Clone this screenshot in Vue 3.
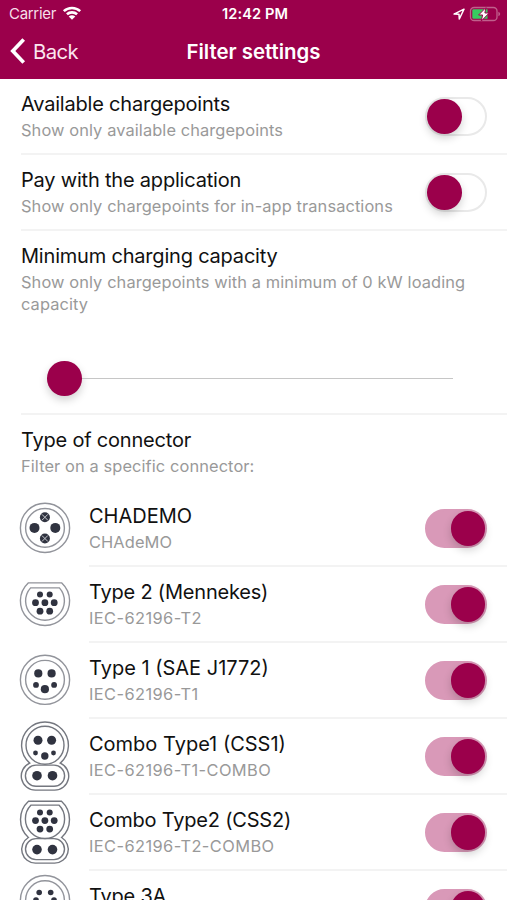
<script setup>
import { reactive } from 'vue'

const filters = reactive([
  { title: 'Available chargepoints', sub: 'Show only available chargepoints', on: false },
  { title: 'Pay with the application', sub: 'Show only chargepoints for in-app transactions', on: false }
])

const round = (cy, r) => `M${26 - r} ${cy}a${r} ${r} 0 1 1 ${2 * r} 0a${r} ${r} 0 1 1 ${-2 * r} 0Z`
const flat = (cy, r, top) => {
  const h = Math.sqrt(r * r - (cy - top) * (cy - top))
  return `M${26 - h} ${top}H${26 + h}A${r} ${r} 0 1 1 ${26 - h} ${top}Z`
}
const mennekes = (y) => [
  [21, y, 3], [30.7, y, 3],
  [16.5, y + 8.2, 3.4], [25.9, y + 8.2, 3.4], [35.2, y + 8.2, 3.4],
  [21, y + 16.7, 3.4], [30.7, y + 16.7, 3.4]
]

const connectors = reactive([
  {
    title: 'CHADEMO', sub: 'CHAdeMO', on: true, fit: 'plain',
    outlines: [round(37.6, 24.6), round(37.6, 19.4)],
    dots: [[15.5, 37.6, 5], [36.3, 37.6, 5], [25.9, 27, 5], [25.9, 48.2, 5]],
    crosses: [[25.9, 27], [25.9, 48.2]]
  },
  {
    title: 'Type 2 (Mennekes)', sub: 'IEC-62196-T2', on: true, fit: 'tight',
    outlines: [flat(34.6, 24.6, 16.6), flat(34.6, 19.4, 21.6)],
    dots: mennekes(28.2)
  },
  {
    title: 'Type 1 (SAE J1772)', sub: 'IEC-62196-T1', on: true,
    outlines: [round(37.5, 24.6), round(37.5, 19.4)],
    dots: [[19.3, 31.1, 4.1], [32.6, 31.1, 4.1], [17, 42.6, 2.9], [35.1, 42.6, 2.9], [25.9, 46.9, 4.1]]
  },
  {
    title: 'Combo Type1 (CSS1)', sub: 'IEC-62196-T1-COMBO', on: true, dark: true,
    outlines: [
      'M10.7 44.8A23.4 23.4 0 1 1 41.3 44.8A14.1 14.1 0 0 1 35.6 71.8H16.4A14.1 14.1 0 0 1 10.7 44.8Z',
      round(27, 19),
      'M17 46.8H35A10.6 10.6 0 0 1 35 68H17A10.6 10.6 0 0 1 17 46.8Z'
    ],
    dots: [[19, 21.9, 4.5], [32.6, 21.9, 4.5], [16.5, 34.7, 2.4], [34.5, 34.7, 2.4], [25.8, 37.7, 3.7], [18, 57.4, 4.8], [33.5, 57.4, 4.8]]
  },
  {
    title: 'Combo Type2 (CSS2)', sub: 'IEC-62196-T2-COMBO', on: true, dark: true, fit: 'tight',
    outlines: [
      'M9.5 7H42.5A24.6 24.6 0 0 1 42.6 43.2A13.8 13.8 0 0 1 35.6 68.8H16.4A13.8 13.8 0 0 1 9.4 43.2A24.6 24.6 0 0 1 9.5 7Z',
      flat(24.6, 19.6, 10.8),
      'M17 44.3H35A10.5 10.5 0 0 1 35 65.3H17A10.5 10.5 0 0 1 17 44.3Z'
    ],
    dots: [...mennekes(18.1), [18, 55.3, 4.8], [33.5, 55.3, 4.8]]
  },
  {
    title: 'Type 3A', sub: 'IEC-62196-T3A', on: true, fit: 'tight',
    outlines: [round(29.8, 24.6), round(29.8, 19.4)],
    dots: [[20.2, 22.2, 2.8], [31.7, 22.2, 2.8], [17, 29.7, 2.8], [35, 29.7, 2.8]]
  }
])
</script>

<template>
  <div class="screen">
    <header class="header">
      <div class="status">
        <div class="carrier">
          <span>Carrier</span>
          <svg class="wifi" viewBox="0 0 20 15">
            <path d="M1.8 5.1C6.3.9 13.7.9 18.2 5.1" />
            <path d="M4.9 8.3C7.8 5.7 12.2 5.7 15.1 8.3" />
            <path class="fill" d="M6.7 10.5Q10 7.8 13.3 10.5L10 13.8Z" />
          </svg>
        </div>
        <span class="time">12:42 PM</span>
        <div class="indicators">
          <svg class="location" viewBox="0 0 12 12"><path d="M1 6.1 11 1.2 6.3 11 6 6.2Z" /></svg>
          <svg class="battery" viewBox="0 0 32 16">
            <rect class="case" x="1.5" y="1.5" width="26.5" height="13" rx="3.6" />
            <path class="charge" d="M4.5 3.3H18.5V12.7H4.5Q3.3 12.7 3.3 11.5V4.5Q3.3 3.3 4.5 3.3Z" />
            <path class="cap" d="M29.4 5.7Q31.2 6.7 31.2 8T29.4 10.3Z" />
            <path class="bolt" d="M16.9 1.6 9.6 9H13.6L12.3 15 20.2 7H15.9Z" />
          </svg>
        </div>
      </div>
      <nav class="nav">
        <button class="back">
          <svg viewBox="0 0 16 26"><path d="M13.7 1.5 2.8 13 13.7 24.5" /></svg>
          <span>Back</span>
        </button>
        <h1>Filter settings</h1>
      </nav>
    </header>

    <main>
      <section v-for="f in filters" :key="f.title" class="row">
        <div class="text">
          <h2>{{ f.title }}</h2>
          <p>{{ f.sub }}</p>
        </div>
        <button class="toggle" :class="{ on: f.on }" @click="f.on = !f.on"><i></i></button>
      </section>

      <section class="row capacity">
        <div class="text">
          <h2>Minimum charging capacity</h2>
          <p>Show only chargepoints with a minimum of 0 kW loading capacity</p>
        </div>
        <div class="slider"><i class="thumb"></i><span class="track"></span></div>
      </section>

      <section class="row heading">
        <div class="text">
          <h2>Type of connector</h2>
          <p>Filter on a specific connector:</p>
        </div>
      </section>

      <div v-for="c in connectors" :key="c.title" class="connector">
        <svg class="plug" :class="{ dark: c.dark }" viewBox="0 0.7 52 76">
          <path v-for="d in c.outlines" :key="d" class="outline" :d="d" />
          <circle v-for="(p, i) in c.dots" :key="i" :cx="p[0]" :cy="p[1]" :r="p[2]" />
          <path v-for="(p, i) in c.crosses || []" :key="'x' + i" class="cross" :d="`M${p[0] - 3} ${p[1] - 3}l6 6m0-6l-6 6`" />
        </svg>
        <section class="row">
          <div class="text" :class="c.fit">
            <h2>{{ c.title }}</h2>
            <p>{{ c.sub }}</p>
          </div>
          <button class="toggle" :class="{ on: c.on }" @click="c.on = !c.on"><i></i></button>
        </section>
      </div>
    </main>
  </div>
</template>

<style>
body {
  margin: 0;
  background: #fff;
}
</style>

<style scoped>
* {
  box-sizing: border-box;
}
.screen {
  width: 507px;
  height: 900px;
  overflow: hidden;
  background: #fff;
  font-family: Inter, 'Liberation Sans', sans-serif;
  color: #111;
}
h1, h2, p {
  margin: 0;
  font-weight: 400;
}
button {
  border: 0;
  padding: 0;
  background: none;
  font: inherit;
  color: inherit;
}
.header {
  height: 79px;
  background: #9b004b;
  color: #fff;
}
.status {
  height: 27px;
  padding: 0 6px 0 9px;
  display: grid;
  grid-template-columns: 1fr auto 1fr;
  align-items: center;
  font-size: 15px;
}
.carrier {
  display: flex;
  align-items: center;
  gap: 6px;
  color: #f6dfe9;
  letter-spacing: -0.3px;
}
.wifi {
  width: 20px;
  height: 15px;
  fill: none;
  stroke: #fff;
  stroke-width: 2.6;
}
.wifi .fill {
  fill: #fff;
  stroke: none;
}
.time {
  font-weight: 600;
  font-size: 14.6px;
  letter-spacing: 0.1px;
}
.indicators {
  display: flex;
  justify-content: flex-end;
  align-items: center;
  gap: 4px;
}
.location {
  width: 12px;
  height: 12px;
  fill: none;
  stroke: #fff;
  stroke-width: 1.5;
  stroke-linejoin: round;
}
.battery {
  width: 32px;
  height: 16px;
}
.case {
  fill: none;
  stroke: #c0608c;
  stroke-width: 1.3;
}
.charge {
  fill: #38cc60;
}
.cap {
  fill: #c0608c;
}
.bolt {
  fill: #fff;
  stroke: #9b004b;
  stroke-width: 1;
}
.nav {
  height: 48px;
  display: grid;
  grid-template-columns: 1fr auto 1fr;
  align-items: center;
  padding: 0 10px;
}
.back {
  display: flex;
  align-items: center;
  gap: 7px;
  font-size: 20.3px;
  letter-spacing: -0.6px;
  color: #fbe6ef;
}
.back svg {
  width: 16px;
  height: 26px;
  fill: none;
  stroke: #fff;
  stroke-width: 3.7;
}
h1 {
  font-size: 20.4px;
  font-weight: 600;
}
.row {
  height: 76px;
  margin-left: 21px;
  padding: 13px 19.7px 0 0;
  border-bottom: 2px solid #f3f3f3;
  display: flex;
  justify-content: space-between;
}
.text h2 {
  font-size: 20px;
  line-height: 25px;
  letter-spacing: -0.2px;
  white-space: nowrap;
}
.text p {
  margin-top: 2px;
  font-size: 16.4px;
  line-height: 22px;
  letter-spacing: 0.1px;
  color: #999;
}
.capacity {
  height: 184px;
  display: block;
}
.heading {
  border-bottom-color: transparent;
}
.toggle {
  flex: none;
  width: 62px;
  height: 39px;
  margin-top: 5px;
  border-radius: 20px;
  border: 2px solid #e9e9e9;
  display: flex;
  align-items: center;
}
.toggle i,
.thumb {
  width: 34.5px;
  height: 34.5px;
  border-radius: 50%;
  background: #9b004b;
  box-shadow: 0 4px 9px rgba(0, 0, 0, 0.18);
}
.toggle.on {
  background: #d999b8;
  border-color: #d999b8;
  justify-content: flex-end;
}
.slider {
  display: flex;
  align-items: center;
  margin: 46px 34px 0 26px;
}
.track {
  flex: 1;
  height: 1.5px;
  background: #c6c6c6;
}
.connector {
  display: flex;
  padding-left: 19px;
}
.plug {
  flex: none;
  width: 52px;
  height: 76px;
  fill: #303340;
}
.outline {
  fill: none;
  stroke: #92949b;
  stroke-width: 1.4;
}
.dark .outline {
  stroke: #74777f;
}
.cross {
  fill: none;
  stroke: #c8cacf;
  stroke-width: 1;
}
.connector .row {
  flex: 1;
  margin-left: 18px;
}
.connector h2 {
  letter-spacing: 0;
}
.connector .tight h2 {
  letter-spacing: -0.2px;
}
.connector p {
  margin-top: 1.5px;
  letter-spacing: 0.42px;
}
.connector .plain p {
  letter-spacing: 0.1px;
}
</style>
